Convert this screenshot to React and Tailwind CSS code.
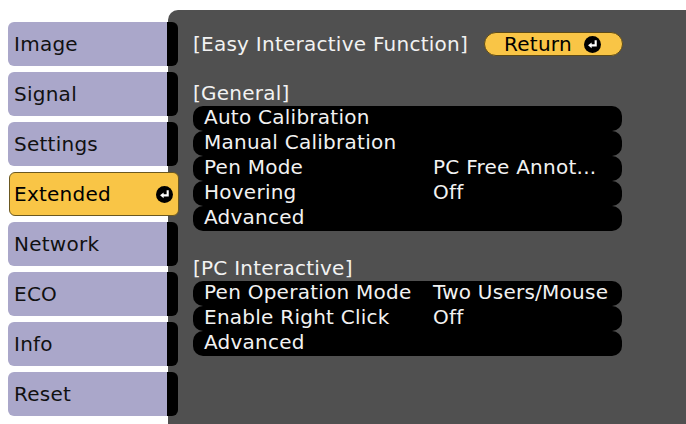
import React from "react";

const tabs = ["Image", "Signal", "Settings", "Extended", "Network", "ECO", "Info", "Reset"];

const general = [
  { label: "Auto Calibration", value: "" },
  { label: "Manual Calibration", value: "" },
  { label: "Pen Mode", value: "PC Free Annot..." },
  { label: "Hovering", value: "Off" },
  { label: "Advanced", value: "" },
];

const pcInteractive = [
  { label: "Pen Operation Mode", value: "Two Users/Mouse" },
  { label: "Enable Right Click", value: "Off" },
  { label: "Advanced", value: "" },
];

// round black "enter" mark used by the selected tab and the Return button
const EnterIcon = () => (
  <svg width="17" height="17" viewBox="0 0 16 16">
    <circle cx="8" cy="8" r="8" fill="#000" />
    <path d="M11 4v4.8H6.5" stroke="#fff" strokeWidth="2" fill="none" />
    <polygon points="3.8,8.8 7.2,6 7.2,11.6" fill="#fff" />
  </svg>
);

const Tab = ({ name, active }) => {
  if (active) {
    return (
      <div className="h-[44px] w-[170px] ml-[1px] flex items-center justify-between pl-[4px] pr-[5px] bg-[#f9c546] border border-[#6b5820] rounded-[6px] text-black">
        <span>{name}</span>
        <EnterIcon />
      </div>
    );
  }
  return (
    <div className="h-[44px] w-[170px] flex">
      <div className="flex-1 flex items-center pl-[6px] bg-[#aaa7ca] rounded-l-[6px] text-[#111]">
        {name}
      </div>
      <div className="w-[11px] bg-black rounded-r-[6px]" />
    </div>
  );
};

const Rows = ({ items }) => (
  <div className="w-[429px] flex flex-col">
    {items.map((item, i) => (
      <div
        key={i}
        className="h-[25px] flex pl-[11px] pt-[1px] bg-black rounded-[10px] leading-[21px] text-[#f2f2f2]"
      >
        <span className="w-[229px] shrink-0">{item.label}</span>
        <span>{item.value}</span>
      </div>
    ))}
  </div>
);

export default function App() {
  return (
    <div className="w-[686px] h-[424px] bg-white flex overflow-hidden font-['DejaVu_Sans',sans-serif] text-[20px] leading-[25px] tracking-[0.25px]">
      <div className="w-[160px] ml-[8px] pt-[22px] flex flex-col gap-[6px] shrink-0 relative z-10">
        {tabs.map((t) => (
          <Tab key={t} name={t} active={t === "Extended"} />
        ))}
      </div>

      <div className="flex-1 mt-[10px] bg-[#505050] rounded-tl-[10px] pl-[25px] text-[#f2f2f2]">
        <div className="mt-[22px] h-[24px] flex items-center">
          <span>[Easy Interactive Function]</span>
          <div className="ml-[16px] w-[139px] h-[24px] flex items-center pl-[19px] bg-[#f9c546] border border-[#5e4b17] rounded-full text-black">
            <span>Return</span>
            <span className="ml-[12px] flex">
              <EnterIcon />
            </span>
          </div>
        </div>

        <div className="mt-[25px]">[General]</div>
        <Rows items={general} />

        <div className="mt-[25px]">[PC Interactive]</div>
        <Rows items={pcInteractive} />
      </div>
    </div>
  );
}
